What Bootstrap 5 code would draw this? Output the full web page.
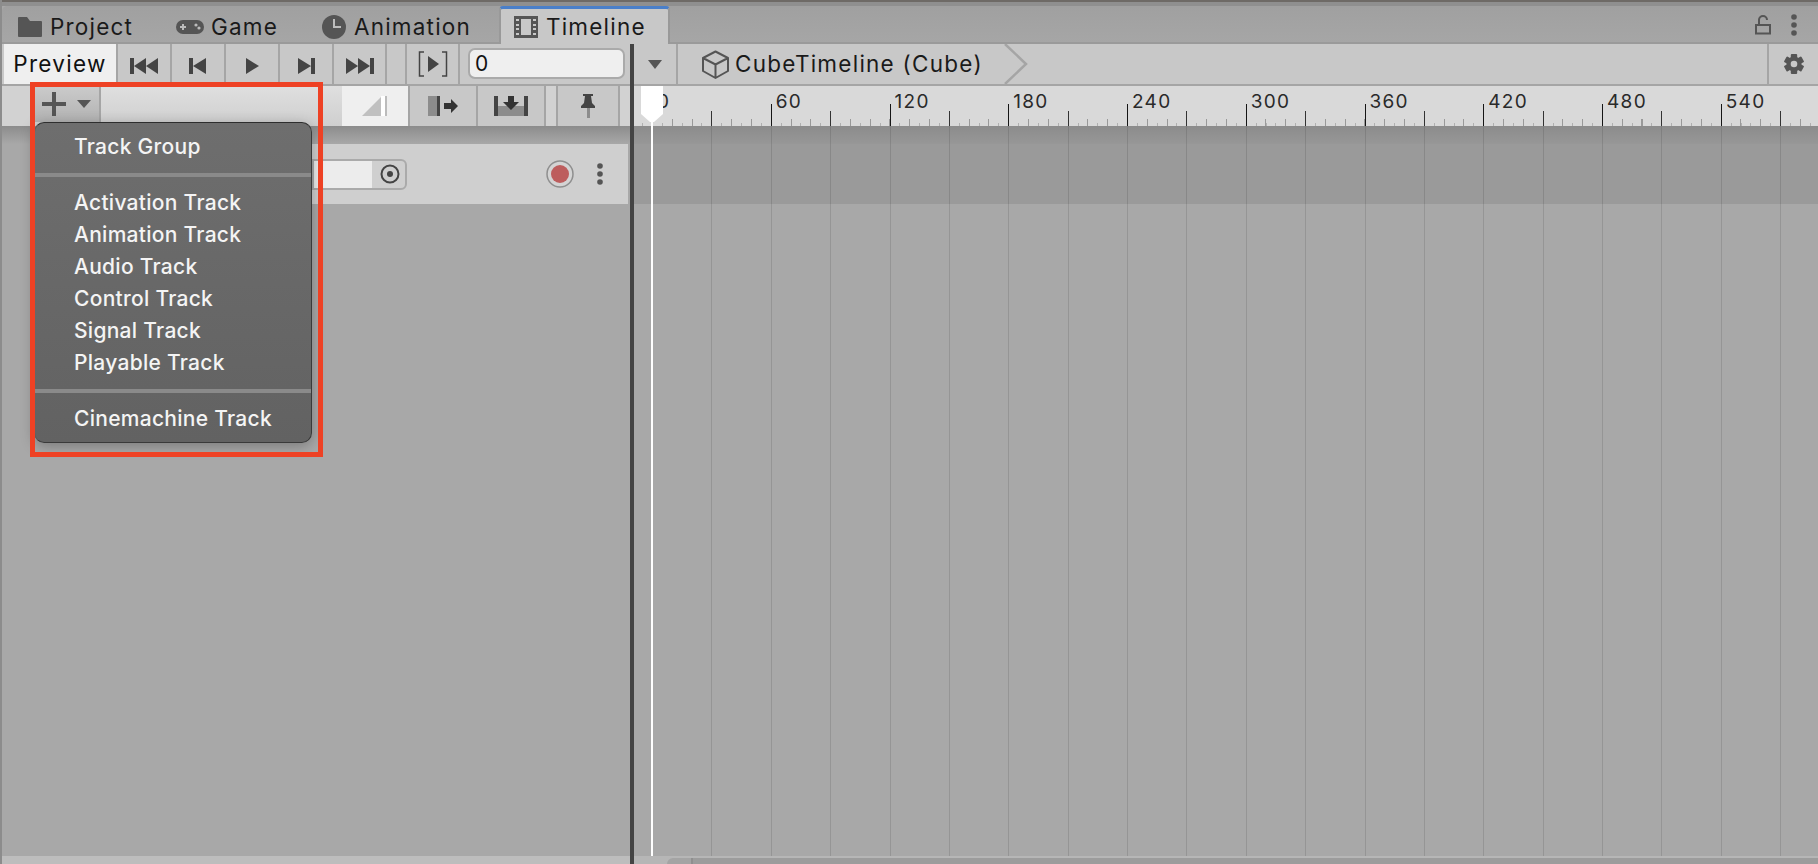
<!doctype html>
<html lang="en">
<head>
<meta charset="utf-8">
<title>Timeline</title>
<link href="https://cdn.jsdelivr.net/npm/bootstrap@5.3.0/dist/css/bootstrap.min.css" rel="stylesheet">
<style>
html,body{margin:0;height:100%;overflow:hidden;background:#a8a8a8}
body,.dropdown-menu{font-family:Inter,"Liberation Sans",sans-serif}
.app{width:1818px;height:864px;overflow:hidden;border-left:2px solid #8c8c8c;color:#111}
.topstrip{height:6px;background:linear-gradient(#6e6a66 0 2px,#8f8f8f 2px)}
.tabbar{height:38px;background:linear-gradient(#a0a0a0,#a6a6a6);border-bottom:2px solid #9a9a9a;border-top-left-radius:5px;padding-right:21px}
.tabitem{height:38px;font-size:22.5px;letter-spacing:1.2px;line-height:38px;color:#1a1a1a;white-space:nowrap}
.tab-a{width:133px;padding-left:16px;padding-top:3px}.tab-b{width:173px;padding-left:41px;padding-top:3px;gap:7px}.tab-c{width:191px;padding-left:14px;padding-top:3px}
.tab-d{width:171px;padding-left:13px;background:#c8c8c8;border-top:3px solid #4a7fc9;border-right:2px solid #999;border-left:2px solid #999;border-radius:4px 4px 0 0;height:38px;line-height:34px;margin-bottom:-2px;position:relative}
.tabitem svg{flex:none}
.panes{height:820px}
.leftpane{width:628px}
.splitter{width:4px;background:#444;z-index:5}
.rightpane{width:1184px}
.bar1{height:42px;background:#c8c8c8;border-bottom:2px solid #a5a5a5}
.bar2{height:40px;background:#d2d2d2}
.ubtn{border:0;border-radius:0;padding:0;height:40px;background:#c8c8c8;border-right:2px solid #a5a5a5;color:#333;--bs-btn-hover-bg:#c8c8c8}
.w-prev{width:114px;margin-left:2px;background:#efefef;font-size:22.5px;letter-spacing:1.3px;color:#111;line-height:38px}
.w-54{width:54px}.w-18{width:20px}.w-53{width:53px}
.framebox{width:157px;height:31px;margin-left:8px;margin-top:4px;background:#efefef;border:2px solid #aaa;border-radius:7px;font-size:21px;line-height:27px;padding-left:5px;color:#111}
.plusbtn{width:66px;height:36px;margin-left:33px;padding-left:7px;background:linear-gradient(#cbcbcb,#b2b2b2);border-right:2px solid #a5a5a5}
.pluscaret{margin-left:11px}
.midfill{width:241px;background:linear-gradient(#dfdfdf,#cfcfcf)}
.r2btn{width:68px;height:40px;background:#c8c8c8;border-right:2px solid #a5a5a5}
.r2on{background:#efefef;width:68px}
.r2gap{width:12px;height:40px;background:#d2d2d2;border-right:2px solid #a5a5a5}
.r2pin{width:62px}
.shadowband{height:18px;background:linear-gradient(#8c8c8c,#a8a8a8)}
.trackrow{height:60px;background:#cfcfcf;margin-left:60px;margin-right:2px}
.fieldwrap{margin-left:250px;width:95px;height:31px;border:2px solid #aaa;border-radius:0 6px 6px 0;background:linear-gradient(90deg,#ececec 0 58px,#cfcfcf 58px)}
.targetico{margin-left:66px}
.recico{margin-right:22px}
.kebabico{margin-right:24px}
.leftrest{flex:1 1 auto;background:#a8a8a8}
.hscroll-l{height:8px;background:#bdbdbd}
.crumbfill{flex:1 1 auto}
.dd{width:44px;height:40px;border-right:2px solid #a5a5a5}
.crumb{font-size:22.5px;letter-spacing:1.25px;color:#1a1a1a;padding-left:24px;width:350px;position:relative;gap:6px;white-space:nowrap}
.gearbox{width:51px;height:40px;border-left:2px solid #a5a5a5}
.ruler{height:40px;background-color:#d9d9d9;position:relative;background-repeat:no-repeat;background-position:0 100%,0 100%,0 100%,0 100%;background-size:100% 22px,100% 15px,100% 7px,100% 3px;
background-image:
repeating-linear-gradient(90deg,#151515 18px 19px,transparent 19px 136.75px),
repeating-linear-gradient(90deg,#333 18px 19px,transparent 19px 77.375px),
repeating-linear-gradient(90deg,#999 18px 19px,transparent 19px 37.79px),
repeating-linear-gradient(90deg,#b0b0b0 18px 19px,transparent 19px 27.896px)}
.rulerlabels{margin-left:18px;padding-top:5px;font-size:19px;letter-spacing:1.3px;line-height:22px;color:#2a2a2a}
.tickcell{flex:0 0 118.75px;padding-left:5px}
.canvasarea{flex:1 1 auto;position:relative;background-color:#a8a8a8;background-image:repeating-linear-gradient(90deg,#959595 18px 19px,transparent 19px 77.375px)}
.band-r{height:18px;background:linear-gradient(rgba(0,0,0,.17),rgba(0,0,0,.1))}
.track-r{height:60px;background:rgba(0,0,0,.083)}
.hscroll-r{height:8px;background:#b6b6b6;position:relative}
.scrollthumb{margin-left:33px;margin-top:2px;height:6px;background:linear-gradient(90deg,#a4a4a4 0 24px,#8f8f8f 24px 26px,#9c9c9c 26px);border-radius:6px 0 0 0}
.playhead{position:absolute;left:639px;top:86px;width:22px;height:770px;z-index:4;pointer-events:none}
.playhead svg{display:block}
.playline{width:2px;height:734px;background:#fff;margin-left:10px}
.dropdown-menu.addmenu{left:32px;top:122px;width:278px;height:321px;margin:0;padding:8px 0 0;background:linear-gradient(#6e6e6e,#626262);border:1px solid #3a3a3a;border-top-color:#2e2e2e;border-left-color:#5a5a5a;border-radius:10px;box-shadow:0 3px 14px rgba(0,0,0,.28);z-index:7;display:block}
.addmenu .dropdown-item{color:#f4f4f4;font-size:21px;font-weight:500;line-height:32px;height:32px;padding:0 0 0 39px;background:transparent;letter-spacing:.28px}
.addmenu .dropdown-divider{margin:10px 0;border:0;border-top:4px solid #8a8a8a;opacity:1}
.redbox{position:absolute;left:28px;top:82px;width:293px;height:375px;border:5px solid #ee4124;z-index:8;pointer-events:none}
</style>
</head>
<body>
<div class="app position-relative d-flex flex-column">
  <div class="topstrip"></div>
  <div class="tabbar d-flex align-items-start">
    <div class="tabitem tab-a d-flex align-items-center gap-2">
      <svg width="24" height="20" viewBox="0 0 24 20"><path fill="#555" d="M0 1q0-1 1-1h8l3 4h11q1 0 1 1v14q0 1-1 1H1q-1 0-1-1z"/></svg><span>Project</span>
    </div>
    <div class="tabitem tab-b d-flex align-items-center">
      <svg width="28" height="14" viewBox="0 0 28 14"><rect width="28" height="14" rx="7" fill="#555"/><rect x="6" y="4" width="2" height="6" fill="#bbb"/><rect x="4" y="6" width="6" height="2" fill="#bbb"/><circle cx="20" cy="5" r="1.6" fill="#bbb"/><circle cx="23" cy="8" r="1.6" fill="#bbb"/></svg><span>Game</span>
    </div>
    <div class="tabitem tab-c d-flex align-items-center gap-2">
      <svg width="24" height="24" viewBox="0 0 24 24"><circle cx="12" cy="12" r="12" fill="#555"/><path d="M11 4h2v7h6v2h-8z" fill="#bdbdbd"/></svg><span>Animation</span>
    </div>
    <div class="tabitem tab-d d-flex align-items-center gap-2">
      <svg width="24" height="22" viewBox="0 0 24 22"><path fill="#555" fill-rule="evenodd" d="M0 0h24v22H0zM7 3v16h10V3zM2 3v2h3V3zM2 8v2h3V8zM2 12v2h3v-2zM2 17v2h3v-2zM19 3v2h3V3zM19 8v2h3V8zM19 12v2h3v-2zM19 17v2h3v-2z"/></svg><span>Timeline</span>
    </div>
    <div class="ms-auto d-flex align-items-center gap-3 tabitem">
      <svg width="16" height="20" viewBox="0 0 16 20"><path fill="none" stroke="#555" stroke-width="2" d="M1 10h14v8.500H1zM4 10V5a4 4 0 0 1 8 0"/></svg>
      <svg width="6" height="22" viewBox="0 0 6 22" class="ms-1"><circle cx="3" cy="3" r="2.800" fill="#555"/><circle cx="3" cy="11" r="2.800" fill="#555"/><circle cx="3" cy="19" r="2.800" fill="#555"/></svg>
    </div>
  </div>

  <div class="panes d-flex">
    <div class="leftpane d-flex flex-column">
      <div class="bar1 d-flex">
        <button class="btn ubtn w-prev">Preview</button>
        <button class="btn ubtn w-54"><svg width="28" height="18" viewBox="0 0 28 18"><path fill="#444" d="M0 1h4v16H0zM4 9l12-8v16zM16 9l12-8v16z"/></svg></button>
        <button class="btn ubtn w-54"><svg width="18" height="18" viewBox="0 0 18 18"><path fill="#444" d="M0 1h4v16H0zM4 9l13-8v16z"/></svg></button>
        <button class="btn ubtn w-54"><svg width="13" height="16" viewBox="0 0 13 16"><path fill="#444" d="M0 0l13 8L0 16z"/></svg></button>
        <button class="btn ubtn w-54"><svg width="18" height="18" viewBox="0 0 18 18"><path fill="#444" d="M14 1h4v16h-4zM14 9L1 1v16z"/></svg></button>
        <button class="btn ubtn w-53"><svg width="28" height="18" viewBox="0 0 28 18"><path fill="#444" d="M24 1h4v16h-4zM24 9L12 1v16zM12 9L0 1v16z"/></svg></button>
        <button class="btn ubtn w-18"></button>
        <button class="btn ubtn w-53"><svg width="30" height="26" viewBox="0 0 30 26"><path fill="none" stroke="#444" stroke-width="1.500" d="M6 1H1.500v24H6M24 1h4.500v24H24"/><path fill="#444" d="M10 5l11 8-11 8z"/></svg></button>
        <div class="framebox">0</div>
      </div>
      <div class="bar2 d-flex">
        <div class="plusbtn d-flex align-items-center">
          <svg width="24" height="24" viewBox="0 0 24 24"><path fill="#555" d="M10 0h4v10h10v4H14v10h-4V14H0v-4h10z"/></svg>
          <svg class="pluscaret" width="14" height="8" viewBox="0 0 14 8"><path fill="#555" d="M0 0h14L7 8z"/></svg>
        </div>
        <div class="midfill"></div>
        <div class="r2btn r2on d-flex align-items-center ps-3"><svg width="30" height="20" viewBox="0 0 30 20"><path fill="#c0c0c0" d="M4 20L23 1v19z"/><rect x="23" width="4" height="20" fill="#fff"/><rect x="27" width="2" height="20" fill="#bbb"/></svg></div>
        <div class="r2btn d-flex align-items-center justify-content-center"><svg width="30" height="20" viewBox="0 0 30 20"><rect width="9" height="20" fill="#8c8c8c"/><rect x="9" width="3" height="20" fill="#444"/><path fill="#333" d="M16 7h7V3l7 7-7 7v-4h-7z"/></svg></div>
        <div class="r2btn d-flex align-items-center justify-content-center"><svg width="34" height="20" viewBox="0 0 34 20"><rect width="4" height="20" fill="#444"/><rect x="30" width="4" height="20" fill="#444"/><rect x="4" y="10" width="26" height="10" fill="#8c8c8c"/><path fill="#333" d="M14 0h6v6h5l-8 8-8-8h5z"/></svg></div>
        <div class="r2gap"></div>
        <div class="r2btn r2pin d-flex align-items-center justify-content-center"><svg width="16" height="24" viewBox="0 0 16 24"><path fill="#444" d="M3 0h10v2h-2l1 7 3 3v2H1v-2l3-3 1-7H3z"/><rect x="7" y="14" width="3" height="10" fill="#8c8c8c"/></svg></div>
        <div class="flex-fill bg-transparent"></div>
      </div>
      <div class="shadowband"></div>
      <div class="trackrow d-flex align-items-center">
        <div class="fieldwrap d-flex align-items-center">
          <svg class="targetico" width="20" height="20" viewBox="0 0 20 20"><circle cx="10" cy="10" r="8.500" fill="none" stroke="#444" stroke-width="2"/><circle cx="10" cy="10" r="3" fill="#444"/></svg>
        </div>
        <svg class="ms-auto recico" width="28" height="28" viewBox="0 0 28 28"><circle cx="14" cy="14" r="13" fill="#d4d4d4" stroke="#8f8f8f" stroke-width="1.500"/><circle cx="14" cy="14" r="9" fill="#bd5d5d"/></svg>
        <svg class="kebabico" width="8" height="24" viewBox="0 0 8 24"><circle cx="4" cy="4" r="2.800" fill="#555"/><circle cx="4" cy="12" r="2.800" fill="#555"/><circle cx="4" cy="20" r="2.800" fill="#555"/></svg>
      </div>
      <div class="leftrest"></div>
      <div class="hscroll-l"></div>
    </div>
    <div class="splitter"></div>
    <div class="rightpane d-flex flex-column">
      <div class="bar1 d-flex">
        <div class="dd d-flex align-items-center justify-content-center"><svg width="14" height="9" viewBox="0 0 14 9"><path fill="#555" d="M0 0h14L7 9z"/></svg></div>
        <div class="crumb d-flex align-items-center">
          <svg width="27" height="29" viewBox="0 0 27 29"><path fill="none" stroke="#555" stroke-width="2" stroke-linejoin="round" d="M13.500 1.500L26 8v13l-12.500 7L1 21V8zM1 8l12.500 6.500L26 8M13.500 14.500V28"/></svg>
          <span>CubeTimeline (Cube)</span>
          <svg class="position-absolute top-0 end-0" width="24" height="40" viewBox="0 0 24 40"><path fill="none" stroke="#a5a5a5" stroke-width="2.500" d="M1 0l21 20L1 40"/></svg>
        </div>
        <div class="crumbfill"></div>
        <div class="gearbox d-flex align-items-center justify-content-center"><svg width="20" height="20" viewBox="0 0 20 20"><g fill="#555"><rect x="6.800" y="0" width="6.400" height="20" rx="1"/><rect x="6.800" y="0" width="6.400" height="20" rx="1" transform="rotate(60 10 10)"/><rect x="6.800" y="0" width="6.400" height="20" rx="1" transform="rotate(120 10 10)"/><circle cx="10" cy="10" r="7.500"/></g><circle cx="10" cy="10" r="3.300" fill="#c8c8c8"/></svg></div>
      </div>
      <div class="ruler">
        <div class="rulerlabels d-flex">
          <div class="tickcell">0</div><div class="tickcell">60</div><div class="tickcell">120</div><div class="tickcell">180</div><div class="tickcell">240</div><div class="tickcell">300</div><div class="tickcell">360</div><div class="tickcell">420</div><div class="tickcell">480</div><div class="tickcell">540</div>
        </div>
      </div>
      <div class="canvasarea d-flex flex-column">
        <div class="band-r"></div>
        <div class="track-r"></div>
      </div>
      <div class="hscroll-r"><div class="scrollthumb"></div></div>
    </div>
  </div>

  <div class="playhead">
    <svg width="22" height="36" viewBox="0 0 22 36"><path fill="#fff" d="M0 0h22v28l-9 8H9l-9-8z"/></svg>
    <div class="playline"></div>
  </div>

  <ul class="dropdown-menu show addmenu list-unstyled">
    <li><a class="dropdown-item" href="#">Track Group</a></li>
    <li><hr class="dropdown-divider"></li>
    <li><a class="dropdown-item" href="#">Activation Track</a></li>
    <li><a class="dropdown-item" href="#">Animation Track</a></li>
    <li><a class="dropdown-item" href="#">Audio Track</a></li>
    <li><a class="dropdown-item" href="#">Control Track</a></li>
    <li><a class="dropdown-item" href="#">Signal Track</a></li>
    <li><a class="dropdown-item" href="#">Playable Track</a></li>
    <li><hr class="dropdown-divider"></li>
    <li><a class="dropdown-item" href="#">Cinemachine Track</a></li>
  </ul>
  <div class="redbox"></div>
</div>
<script src="https://cdn.jsdelivr.net/npm/bootstrap@5.3.0/dist/js/bootstrap.bundle.min.js"></script>
</body>
</html>
